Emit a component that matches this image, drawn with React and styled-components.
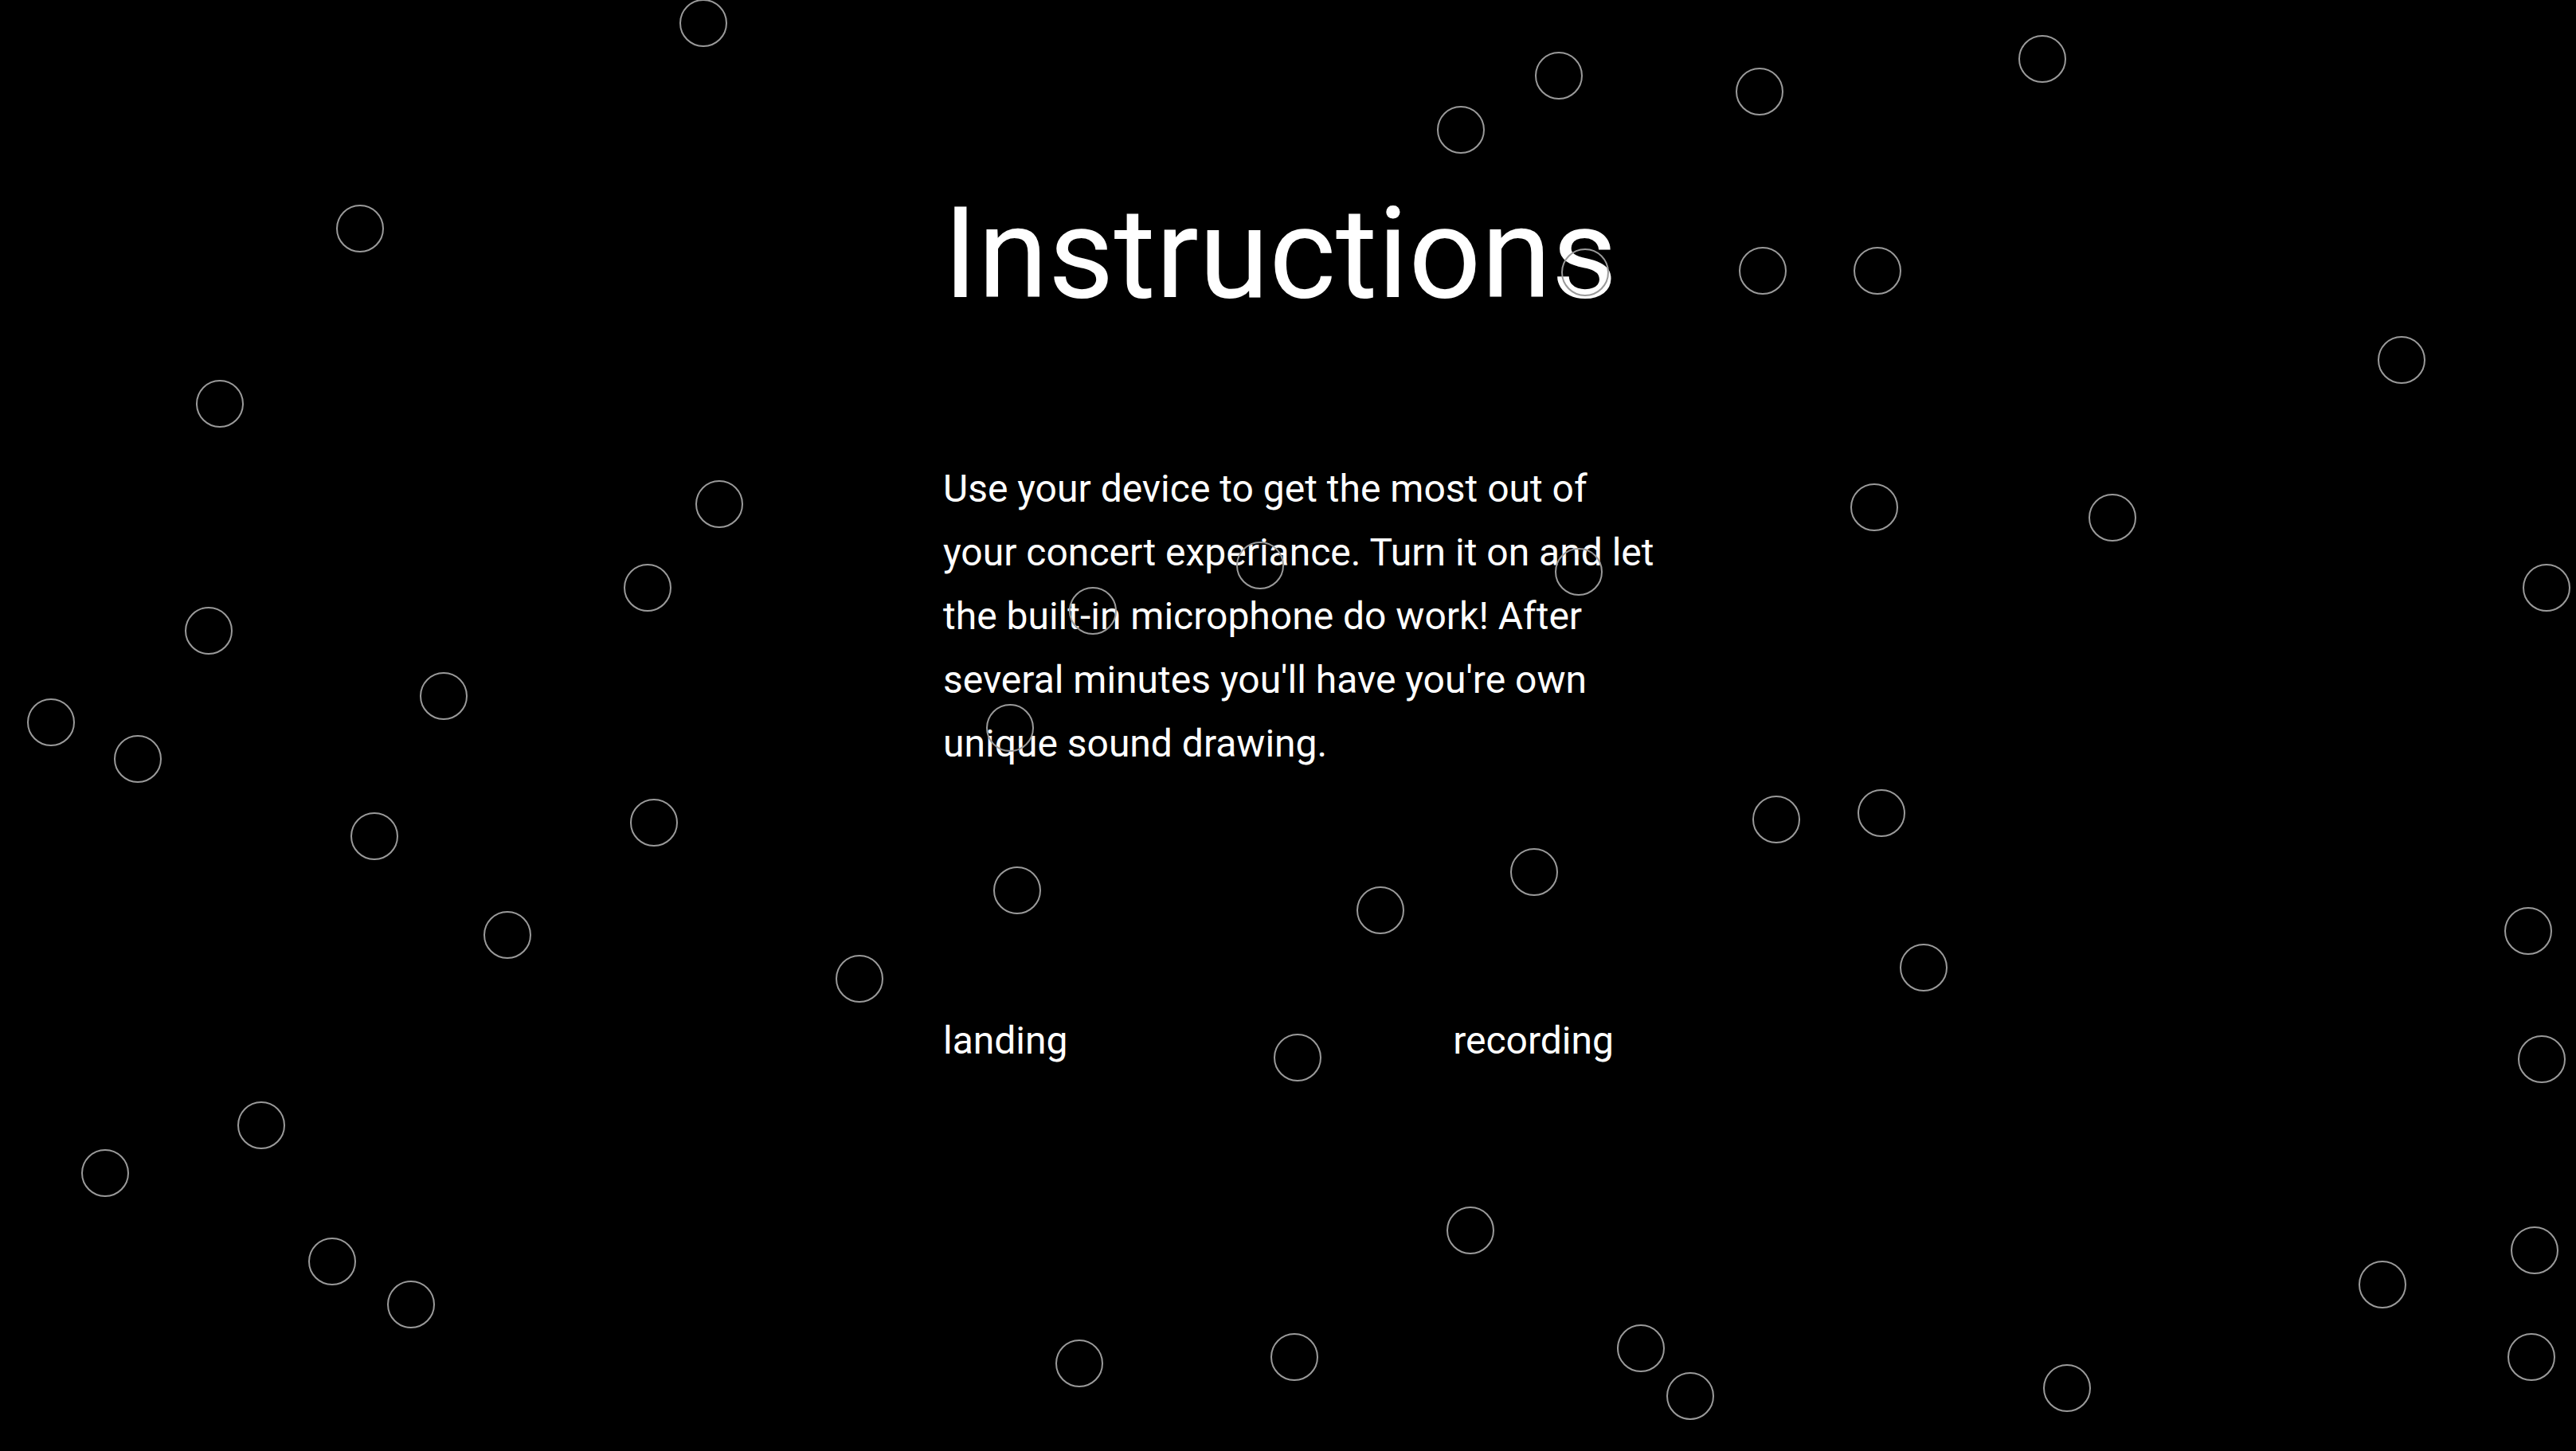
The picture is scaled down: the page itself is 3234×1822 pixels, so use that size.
import React from 'react';
import styled, { createGlobalStyle } from 'styled-components';

const GlobalStyle = createGlobalStyle`
  html, body {
    margin: 0;
    padding: 0;
    background: #000;
  }
  body {
    font-family: Roboto, "Liberation Sans", sans-serif;
    color: #fff;
  }
`;

const Page = styled.div`
  position: relative;
  min-height: 100vh;
  overflow: hidden;
  background: #000;
`;

const Main = styled.main`
  display: flex;
  flex-direction: column;
  align-items: flex-start;
  padding: 225px 0 0 1184px;
`;

const Title = styled.h1`
  margin: 0;
  font-size: 160px;
  font-weight: 400;
  line-height: normal;
  color: #fff;
`;

const Text = styled.p`
  margin: 162px 0 0;
  max-width: 900px;
  font-size: 48px;
  line-height: 80px;
  color: #fff;
`;

const Nav = styled.nav`
  display: flex;
  justify-content: space-between;
  width: 842px;
  margin-top: 304px;
`;

const NavLink = styled.a`
  font-size: 48px;
  line-height: normal;
  color: #fff;
  text-decoration: none;
`;

// floating sound bubbles drawn over the page
const Bubbles = styled.svg`
  position: absolute;
  inset: 0;
  width: 100%;
  height: 100%;
  pointer-events: none;
`;

const dots = [
  [883, 29], [452, 287], [276, 507], [903, 633], [813, 738], [262, 792],
  [64, 907], [173, 953], [557, 874], [470, 1050], [821, 1033], [637, 1174],
  [1079, 1229], [328, 1413], [132, 1473], [417, 1584], [516, 1638],
  [1355, 1712], [1625, 1704], [1846, 1545], [2060, 1693], [2122, 1753],
  [2595, 1743], [2991, 1613], [3182, 1570], [3178, 1704], [3191, 1330],
  [3174, 1169], [2415, 1215], [2362, 1021], [2230, 1029], [1926, 1095],
  [1733, 1143], [1277, 1118], [1629, 1328], [1268, 914], [1372, 767],
  [1582, 710], [1982, 718], [2353, 637], [2652, 650], [3197, 738],
  [3015, 452], [2357, 340], [2213, 340], [1990, 342], [1834, 163],
  [1957, 95], [2209, 115], [2564, 74],
];

const App = () => {
  return (
    <Page>
      <GlobalStyle />
      <Main>
        <Title>Instructions</Title>
        <Text>
          Use your device to get the most out of your concert experiance. Turn it
          on and let the built-in microphone do work! After several minutes
          you'll have you're own unique sound drawing.
        </Text>
        <Nav>
          <NavLink href="#landing">landing</NavLink>
          <NavLink href="#recording">recording</NavLink>
        </Nav>
      </Main>
      <Bubbles>
        {dots.map(([x, y], i) => (
          <circle key={i} cx={x} cy={y} r="29" fill="none" stroke="#9a9a9a" strokeWidth="2" />
        ))}
      </Bubbles>
    </Page>
  );
};

export default App;
